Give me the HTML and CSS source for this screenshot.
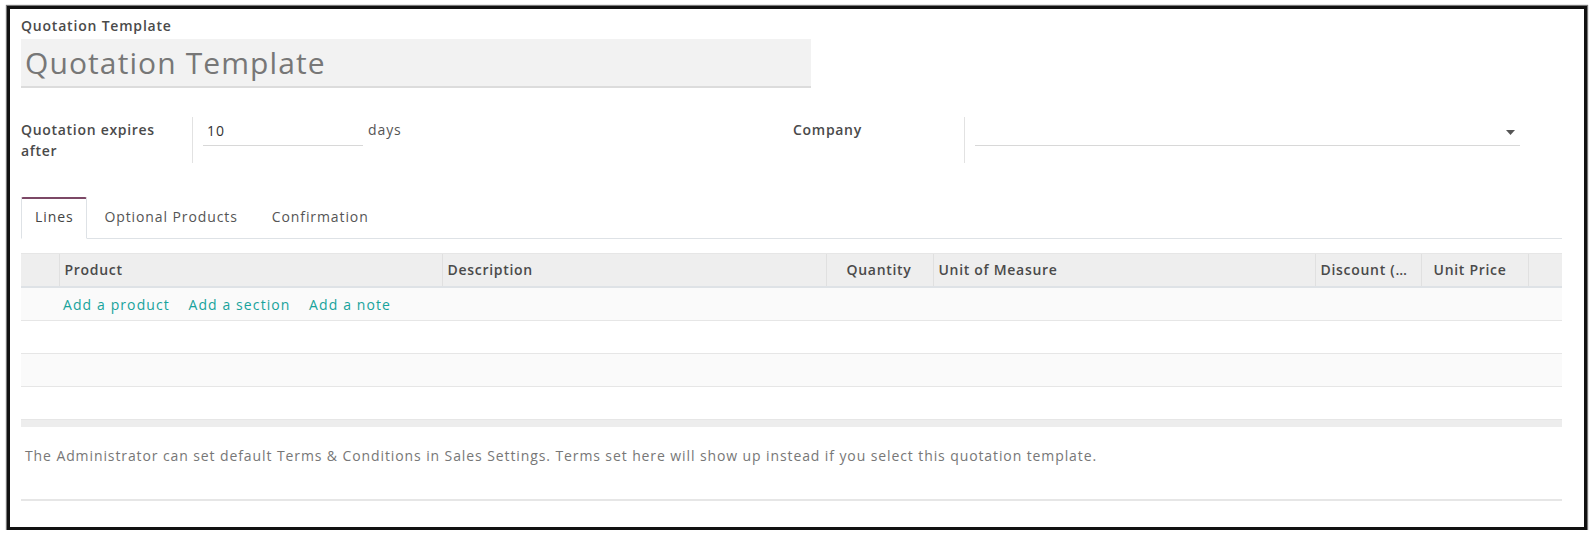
FILE: index.html
```html
<!DOCTYPE html>
<html>
<head>
    <meta charset="UTF-8">
    <title>Quotation Template</title>
    <link rel="stylesheet" href="styles.css">
</head>
<body>
    <div class="frame">
        <div class="sheet">
            <!-- Title -->
            <div class="title-label">Quotation Template</div>
            <input class="title-input" type="text" placeholder="Quotation Template">

            <!-- Main fields -->
            <div class="fields">
                <div class="field">
                    <div class="field-label">Quotation expires after</div>
                    <div class="field-value">
                        <input class="line-input days-input" type="text" value="10">
                        <span class="unit">days</span>
                    </div>
                </div>
                <div class="field">
                    <div class="field-label">Company</div>
                    <div class="field-value">
                        <div class="line-input select">
                            <svg class="caret" width="9" height="5" viewBox="0 0 9 5"><path d="M0 0h9L4.5 5z" fill="#555"/></svg>
                        </div>
                    </div>
                </div>
            </div>

            <!-- Tabs -->
            <ul class="tabs">
                <li class="tab active">Lines</li>
                <li class="tab">Optional Products</li>
                <li class="tab">Confirmation</li>
            </ul>

            <!-- Lines -->
            <table class="lines">
                <colgroup>
                    <col style="width:38px">
                    <col style="width:383px">
                    <col style="width:384px">
                    <col style="width:107px">
                    <col style="width:382px">
                    <col style="width:106px">
                    <col style="width:107px">
                    <col style="width:34px">
                </colgroup>
                <thead>
                    <tr>
                        <th></th>
                        <th>Product</th>
                        <th>Description</th>
                        <th class="num">Quantity</th>
                        <th>Unit of Measure</th>
                        <th class="trunc">Discount (%)</th>
                        <th class="num">Unit Price</th>
                        <th></th>
                    </tr>
                </thead>
                <tbody>
                    <tr class="odd">
                        <td></td>
                        <td colspan="7" class="add-links">
                            <a href="#">Add a product</a>
                            <a href="#">Add a section</a>
                            <a href="#">Add a note</a>
                        </td>
                    </tr>
                    <tr><td colspan="8"></td></tr>
                    <tr class="odd"><td colspan="8"></td></tr>
                    <tr><td colspan="8"></td></tr>
                </tbody>
                <tfoot>
                    <tr><td colspan="8"></td></tr>
                </tfoot>
            </table>

            <!-- Terms -->
            <div class="note">The Administrator can set default Terms &amp; Conditions in Sales Settings. Terms set here will show up instead if you select this quotation template.</div>
        </div>
    </div>
</body>
</html>
```
FILE: styles.css
```css
body {
    margin: 0;
    background-color: #fff;
    font-family: "Open Sans", "Liberation Sans", sans-serif;
    font-size: 14px;
    letter-spacing: 0.9px;
    color: #4c4c4c;
}
.frame {
    margin: 6px 7px 0 7px;
    width: 1580px;
    height: 524px;
    box-sizing: border-box;
    border: 3px solid #111;
    box-shadow: 0 0 1px 1px #777;
}
.sheet {
    padding: 7px 22px 0 11px;
}
.title-label {
    font-size: 14px;
    font-weight: 600;
    letter-spacing: 0.8px;
    line-height: 18px;
    padding-top: 1px;
    color: #4a4a4a;
}
.title-input {
    display: block;
    margin-top: 4px;
    width: 790px;
    height: 49px;
    box-sizing: border-box;
    padding: 0 4px;
    border: none;
    border-bottom: 2px solid #dcdcdc;
    background-color: #f2f2f2;
    font-family: inherit;
    font-size: 30px;
    letter-spacing: 1.1px;
    color: #333;
    outline: none;
}
.title-input::placeholder {
    color: #777;
}
.fields {
    display: grid;
    grid-template-columns: 772px 770px;
    margin-top: 29px;
}
.field {
    display: flex;
    align-items: flex-start;
}
.field-label {
    width: 171px;
    flex-shrink: 0;
    box-sizing: border-box;
    padding: 2px 8px 0 0;
    font-weight: 600;
    letter-spacing: 0.7px;
    line-height: 21px;
    color: #4a4a4a;
}
.field-value {
    display: flex;
    align-items: flex-start;
    border-left: 1px solid #e2e2e2;
    height: 46px;
    padding-left: 10px;
}
.line-input {
    height: 29px;
    box-sizing: border-box;
    border: none;
    border-bottom: 1px solid #d8d8d8;
    font-family: inherit;
    font-size: 14px;
    letter-spacing: inherit;
    color: #333;
    outline: none;
    padding: 0 4px 2px 4px;
}
.days-input {
    width: 160px;
}
.unit {
    margin-left: 5px;
    line-height: 26px;
    color: #555;
}
.select {
    width: 545px;
    position: relative;
}
.caret {
    position: absolute;
    right: 5px;
    top: 13px;
}
.tabs {
    display: flex;
    list-style: none;
    margin: 34px 0 0 0;
    padding: 0;
    border-bottom: 1px solid #dee2e6;
}
.tab {
    padding: 7px 16px 11px 16px;
    line-height: 21px;
    color: #555;
    margin-bottom: -1px;
    border: 1px solid transparent;
    border-top: 2px solid transparent;
}
.tab.active {
    padding: 7px 13px 11px 13px;
    color: #444;
    background-color: #fff;
    border-color: #dee2e6;
    border-top-color: #7c4866;
    border-bottom-color: #fff;
    border-radius: 2px 2px 0 0;
}
.lines {
    margin-top: 14px;
    width: 1541px;
    table-layout: fixed;
    border-collapse: collapse;
}
.lines th {
    height: 30px;
    padding: 0 5px 2px 5px;
    background-color: #eeeeee;
    border-left: 1px solid #e0e0e0;
    border-top: 1px solid #e6e6e6;
    border-bottom: 2px solid #dee2e6;
    text-align: left;
    font-weight: 600;
    letter-spacing: 0.7px;
    color: #4a4a4a;
    white-space: nowrap;
    overflow: hidden;
}
.lines th:first-child {
    border-left: none;
}
.lines th.num {
    text-align: right;
    padding-right: 21px;
}
.lines th.trunc {
    text-overflow: ellipsis;
    padding-right: 12px;
}
.lines td {
    height: 32px;
    padding: 0;
    border-bottom: 1px solid #e6e6e6;
}
.lines tr.odd td {
    background-color: #fafafa;
}
.lines td.add-links {
    padding-left: 4px;
}
.add-links a {
    color: #17a39c;
    letter-spacing: 1.1px;
    text-decoration: none;
    margin-right: 14px;
}
.lines tfoot td {
    height: 7px;
    background-color: #ededed;
    border-bottom: none;
}
.note {
    width: 1541px;
    box-sizing: border-box;
    padding: 18px 4px 0 4px;
    height: 74px;
    line-height: 22px;
    color: #777;
    border-bottom: 2px solid #e6e6e6;
}
```
